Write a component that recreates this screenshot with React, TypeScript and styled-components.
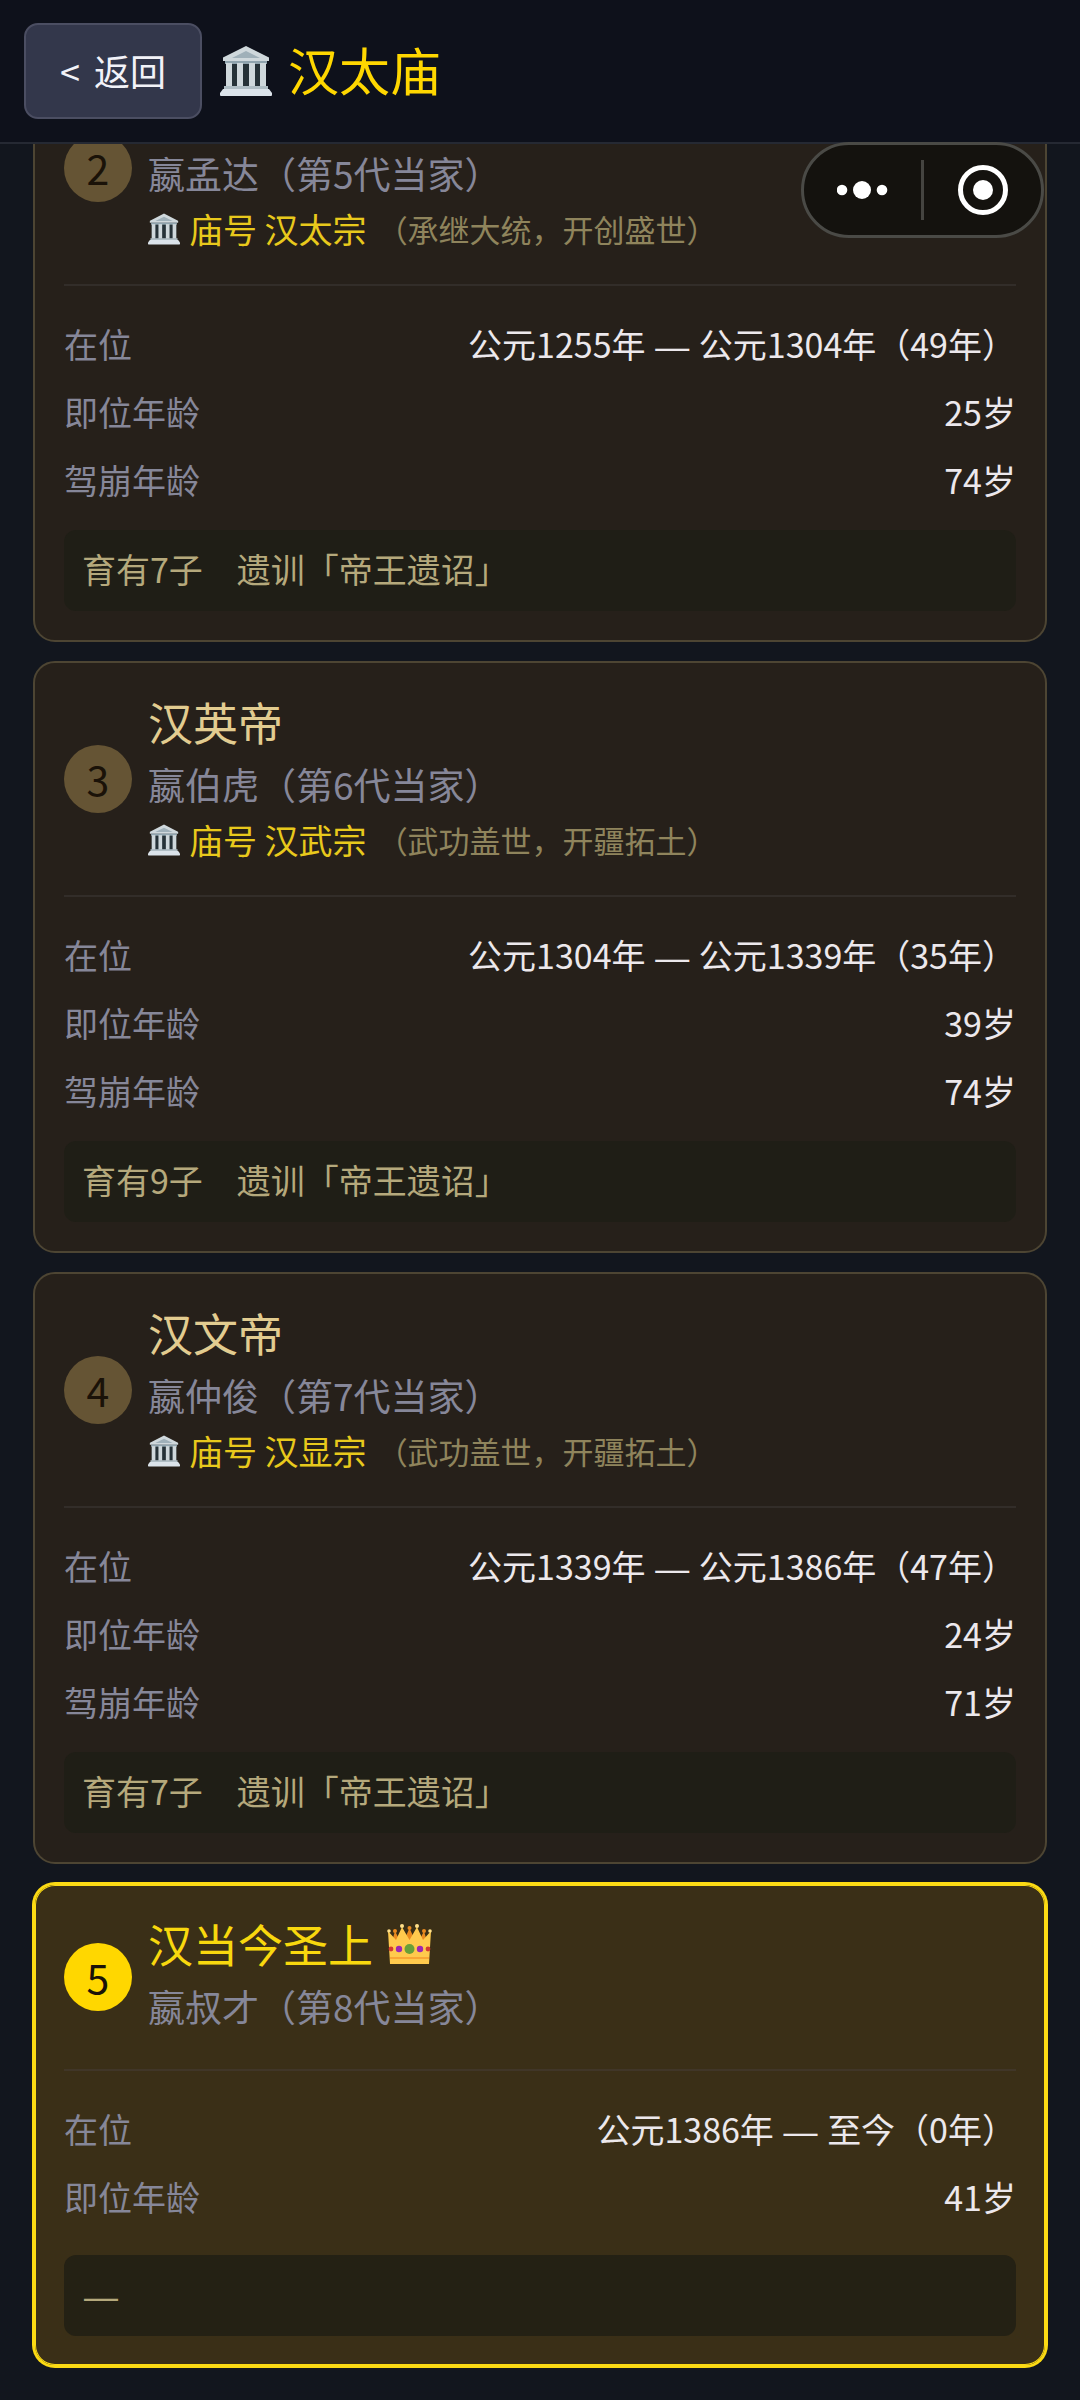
import React, { useLayoutEffect, useRef } from "react";
import styled, { createGlobalStyle, css } from "styled-components";

const GlobalStyle = createGlobalStyle`
  * { box-sizing: border-box; }
  body {
    margin: 0;
    background: #12161e;
    font-family: "Noto Sans CJK SC", sans-serif;
    font-size: 34px;
    color: #ece8ec;
  }
  h1, h2, p, dl, dd { margin: 0; font-weight: 400; }
`;

const Page = styled.div`
  display: flex;
  flex-direction: column;
  height: 100vh;
`;

const TopBar = styled.header`
  flex: none;
  display: flex;
  align-items: center;
  gap: 18px;
  height: 144px;
  padding: 0 24px;
  background: #0e111b;
  border-bottom: 2px solid #252933;
`;

const BackButton = styled.button`
  display: flex;
  align-items: center;
  gap: 14px;
  height: 96px;
  padding: 0 34px 2px;
  border: 2px solid #4b4e62;
  border-radius: 14px;
  background: #33374b;
  color: #f2f2f8;
  font: 400 36px/48px "Noto Sans CJK SC", sans-serif;
  cursor: pointer;
`;

const PageTitle = styled.h1`
  display: flex;
  align-items: center;
  gap: 16px;
  color: #ffd700;
  font-size: 51px;
  line-height: 72px;
`;

const TitleText = styled.span`
  padding-bottom: 4px;
`;

const Scroller = styled.main`
  flex: 1;
  min-height: 0;
  overflow-y: auto;
  scrollbar-width: none;
`;

const EmperorList = styled.div`
  display: flex;
  flex-direction: column;
  gap: 19px;
  padding: 0 33px 33px;
`;

const Card = styled.article<{ $current: boolean }>`
  padding: 29px;
  border: 2px solid #4d4533;
  border-radius: 22px;
  background: #26201a;
  ${(p) =>
    p.$current &&
    css`
      border-color: #fbda14;
      background: #3a2f17;
      box-shadow: 0 0 0 1px #fbda14, inset 0 0 0 1px #fbda14;
    `}
`;

const CardHead = styled.div<{ $current: boolean }>`
  display: flex;
  align-items: center;
  gap: 16px;
  padding-bottom: 29px;
  border-bottom: 2px solid ${(p) => (p.$current ? "#403628" : "#322d29")};
`;

const Order = styled.span<{ $current: boolean }>`
  flex: none;
  display: grid;
  place-items: center;
  width: 68px;
  height: 68px;
  padding-bottom: 3px;
  border-radius: 50%;
  background: ${(p) => (p.$current ? "#ffd700" : "#655434")};
  color: #1a1208;
  font-size: 41px;
  line-height: 48px;
`;

const Titles = styled.div`
  padding-bottom: 2px;
`;

const Name = styled.h2<{ $current: boolean }>`
  display: flex;
  align-items: center;
  gap: 14px;
  height: 60px;
  color: ${(p) => (p.$current ? "#f8d80e" : "#e2cc90")};
  font-size: 45px;
  line-height: 60px;
`;

const Person = styled.p`
  color: #868799;
  font-size: 37px;
  line-height: 64px;
`;

const Temple = styled.p`
  display: flex;
  align-items: center;
  color: #e8c91c;
  line-height: 48px;
`;

const TempleName = styled.span`
  margin: 0 10px 0 9px;
`;

const Praise = styled.span`
  color: #8f845c;
  font-size: 31px;
`;

const Facts = styled.dl`
  padding: 24px 0 2px;
`;

const Fact = styled.div`
  display: flex;
  align-items: center;
  justify-content: space-between;
  line-height: 68px;
`;

const FactLabel = styled.dt`
  color: #868799;
`;

const Dash = styled.span`
  padding: 0 2px;
  font-family: "Liberation Sans", sans-serif;
  line-height: 40px;
`;

const Note = styled.p<{ $current: boolean }>`
  margin-top: ${(p) => (p.$current ? 22 : 14)}px;
  padding: 0 18px 4px;
  border-radius: 12px;
  background: ${(p) => (p.$current ? "#242114" : "#1f1e16")};
  color: #b5a97c;
  line-height: 77px;
`;

const Capsule = styled.div`
  position: fixed;
  top: 142px;
  right: 36px;
  display: flex;
  align-items: center;
  width: 243px;
  height: 96px;
  border: 3px solid #4a4a46;
  border-radius: 48px;
  background: #14120e;
`;

const CapsuleButton = styled.button`
  flex: 1;
  display: grid;
  place-items: center;
  height: 100%;
  padding: 0;
  border: 0;
  background: none;
  cursor: pointer;
`;

const CapsuleRule = styled.span`
  width: 3px;
  height: 60px;
  background: #454440;
`;

function TempleIcon({ size }: { size: number }) {
  return (
    <svg width={size} height={size} viewBox="0 0 52 52" aria-hidden="true">
      <rect x="6" y="14" width="40" height="30" fill="#263238" />
      <path d="M26 1 L48 12 Q49 12 49 13 V16 H3 V13 Q3 12 4 12 Z" fill="#cfd8dc" />
      <path d="M26 6 L40 13 H12 Z" fill="#9fb0b9" />
      <rect x="5" y="16" width="42" height="3" fill="#90a4ae" />
      <g fill="#cfd8dc">
        <rect x="6" y="18" width="6" height="24" />
        <rect x="17" y="18" width="6" height="24" />
        <rect x="29" y="18" width="6" height="24" />
        <rect x="40" y="18" width="6" height="24" />
      </g>
      <rect x="4" y="41" width="44" height="4" fill="#b0bec5" />
      <path d="M3 44 H49 L52 48 V50 Q52 51 51 51 H1 Q0 51 0 50 V48 Z" fill="#dbe3ea" />
    </svg>
  );
}

function CrownIcon() {
  return (
    <svg width="45" height="42" viewBox="0 0 45 42" aria-hidden="true">
      <g fill="#e98a1f">
        <path d="M4 22 L8 8 L15 22 Z M16 20 L22.5 5 L29 20 Z M30 22 L37 8 L41 22 Z" />
        <circle cx="8" cy="8" r="2" />
        <circle cx="22.5" cy="5" r="2" />
        <circle cx="37" cy="8" r="2" />
      </g>
      <path
        d="M1 8 L9 17 L15 4 L22.5 17 L30 4 L36 17 L44 8 L42 41 H3 Z"
        fill="#ffca4d"
      />
      <g fill="#ffe08a">
        <circle cx="2" cy="8" r="1.8" />
        <circle cx="15" cy="3" r="2" />
        <circle cx="30" cy="3" r="2" />
        <circle cx="43" cy="8" r="1.8" />
      </g>
      <rect x="3" y="34" width="39" height="2" fill="#f9a735" />
      <circle cx="22.5" cy="26" r="5" fill="#689f38" />
      <circle cx="12" cy="26" r="3.2" fill="#9c27b0" />
      <circle cx="33" cy="26" r="3.2" fill="#9c27b0" />
      <circle cx="4" cy="26" r="2.4" fill="#d43a2f" />
      <circle cx="41" cy="26" r="2.4" fill="#d43a2f" />
    </svg>
  );
}

type Emperor = {
  order: number;
  name?: string;
  person: string;
  temple?: string;
  praise?: string;
  reign: [string, string];
  ages: [string, string][];
  note?: string;
  current?: boolean;
};

const emperors: Emperor[] = [
  {
    order: 2,
    person: "嬴孟达（第5代当家）",
    temple: "庙号 汉太宗",
    praise: "（承继大统，开创盛世）",
    reign: ["公元1255年", "公元1304年（49年）"],
    ages: [
      ["即位年龄", "25岁"],
      ["驾崩年龄", "74岁"],
    ],
    note: "育有7子　遗训「帝王遗诏」",
  },
  {
    order: 3,
    name: "汉英帝",
    person: "嬴伯虎（第6代当家）",
    temple: "庙号 汉武宗",
    praise: "（武功盖世，开疆拓土）",
    reign: ["公元1304年", "公元1339年（35年）"],
    ages: [
      ["即位年龄", "39岁"],
      ["驾崩年龄", "74岁"],
    ],
    note: "育有9子　遗训「帝王遗诏」",
  },
  {
    order: 4,
    name: "汉文帝",
    person: "嬴仲俊（第7代当家）",
    temple: "庙号 汉显宗",
    praise: "（武功盖世，开疆拓土）",
    reign: ["公元1339年", "公元1386年（47年）"],
    ages: [
      ["即位年龄", "24岁"],
      ["驾崩年龄", "71岁"],
    ],
    note: "育有7子　遗训「帝王遗诏」",
  },
  {
    order: 5,
    name: "汉当今圣上",
    person: "嬴叔才（第8代当家）",
    reign: ["公元1386年", "至今（0年）"],
    ages: [["即位年龄", "41岁"]],
    current: true,
  },
];

function EmperorCard({ emperor }: { emperor: Emperor }) {
  const current = Boolean(emperor.current);
  return (
    <Card $current={current}>
      <CardHead $current={current}>
        <Order $current={current}>{emperor.order}</Order>
        <Titles>
          <Name $current={current}>
            {emperor.name}
            {current && <CrownIcon />}
          </Name>
          <Person>{emperor.person}</Person>
          {emperor.temple && (
            <Temple>
              <TempleIcon size={32} />
              <TempleName>{emperor.temple}</TempleName>
              <Praise>{emperor.praise}</Praise>
            </Temple>
          )}
        </Titles>
      </CardHead>
      <Facts>
        <Fact>
          <FactLabel>在位</FactLabel>
          <dd>
            {emperor.reign[0]} <Dash>—</Dash> {emperor.reign[1]}
          </dd>
        </Fact>
        {emperor.ages.map(([label, value]) => (
          <Fact key={label}>
            <FactLabel>{label}</FactLabel>
            <dd>{value}</dd>
          </Fact>
        ))}
      </Facts>
      <Note $current={current}>{emperor.note ?? <Dash>—</Dash>}</Note>
    </Card>
  );
}

export default function App() {
  const scroller = useRef<HTMLElement>(null);

  // The newest reign is last, so the list opens at its end.
  useLayoutEffect(() => {
    const el = scroller.current;
    if (el) el.scrollTop = el.scrollHeight;
  }, []);

  return (
    <Page>
      <GlobalStyle />
      <TopBar>
        <BackButton type="button">
          <span>&lt;</span>
          <span>返回</span>
        </BackButton>
        <PageTitle>
          <TempleIcon size={52} />
          <TitleText>汉太庙</TitleText>
        </PageTitle>
      </TopBar>
      <Scroller ref={scroller}>
        <EmperorList>
          {emperors.map((e) => (
            <EmperorCard key={e.order} emperor={e} />
          ))}
        </EmperorList>
      </Scroller>
      <Capsule>
        <CapsuleButton type="button" aria-label="更多">
          <svg width="52" height="20" viewBox="0 0 52 20" fill="#fff">
            <circle cx="5" cy="10" r="5.3" />
            <circle cx="25" cy="10" r="9" />
            <circle cx="45" cy="10" r="5.3" />
          </svg>
        </CapsuleButton>
        <CapsuleRule />
        <CapsuleButton type="button" aria-label="关闭">
          <svg width="52" height="52" viewBox="0 0 52 52">
            <circle cx="26" cy="26" r="22.5" fill="none" stroke="#fff" strokeWidth="5" />
            <circle cx="26" cy="26" r="10" fill="#fff" />
          </svg>
        </CapsuleButton>
      </Capsule>
    </Page>
  );
}
